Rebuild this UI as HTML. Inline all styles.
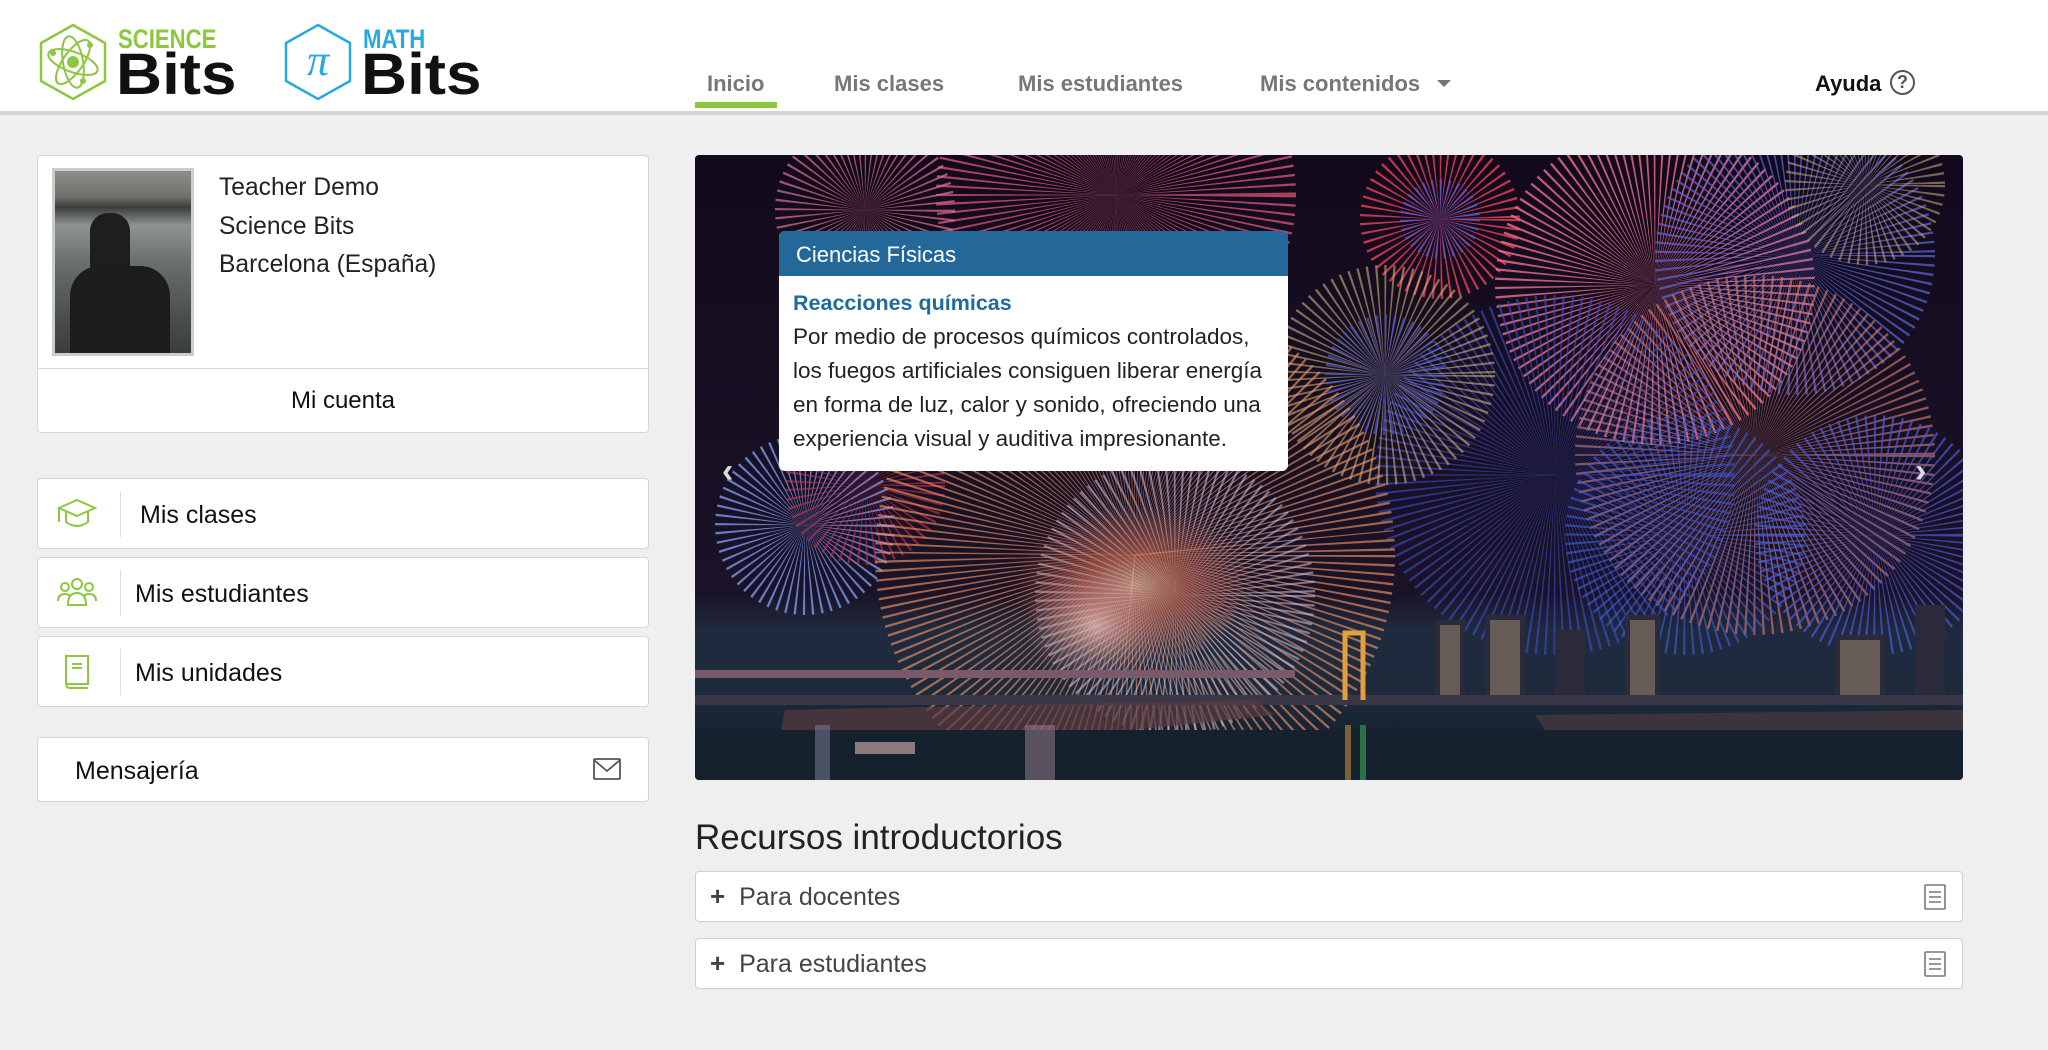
<!DOCTYPE html>
<html><head><meta charset="utf-8">
<style>
*{box-sizing:border-box;margin:0;padding:0}
body{width:2048px;height:1050px;background:#efefef;font-family:"Liberation Sans",Arial,sans-serif;position:relative;overflow:hidden;color:#222}
.hdr{position:absolute;left:0;top:0;width:2048px;height:115px;background:#fff;border-bottom:4px solid #d4d4d4}
.abs{position:absolute}
.nav{position:absolute;top:71px;font-size:22px;font-weight:bold;color:#777;white-space:nowrap}
.card{position:absolute;background:#fff;border:1px solid #d6d6d6;border-radius:4px}
.mi{position:absolute;left:37px;width:612px;height:71px;background:#fff;border:1px solid #d6d6d6;border-radius:4px}
.mi .sep{position:absolute;left:82px;top:12px;width:1px;height:46px;background:#ddd}
.mi .t{position:absolute;left:102px;top:22px;font-size:25px;color:#111}
.mi svg{position:absolute;left:18px;top:17px}
.acc{position:absolute;left:695px;width:1268px;height:51px;background:#fff;border:1px solid #d0d0d0;border-radius:4px}
.acc .t{position:absolute;left:14px;top:9px;font-size:25px;color:#444}
.acc svg{position:absolute;right:16px;top:12px}
.bits{position:absolute;top:46px;font-size:58px;font-weight:bold;color:#111;line-height:58px;transform:scaleX(1.1);transform-origin:left}
</style></head><body>
<div class="hdr"></div>
<svg class="abs" style="left:38px;top:23px" width="70" height="78" viewBox="0 0 70 78">
<polygon points="35,2 67,20 67,58 35,76 3,58 3,20" fill="none" stroke="#8dc63f" stroke-width="2.5"/>
<g fill="none" stroke="#8dc63f" stroke-width="2">
<ellipse cx="35" cy="39" rx="26" ry="10" transform="rotate(20 35 39)"/>
<ellipse cx="35" cy="39" rx="26" ry="10" transform="rotate(-55 35 39)"/>
<ellipse cx="35" cy="39" rx="26" ry="10" transform="rotate(80 35 39)"/>
</g><circle cx="35" cy="39" r="6" fill="#8dc63f"/><circle cx="15" cy="30" r="3" fill="#8dc63f"/><circle cx="52" cy="22" r="3" fill="#8dc63f"/><circle cx="45" cy="58" r="3" fill="#8dc63f"/>
</svg>
<div class="abs" style="left:118px;top:24px;font-size:27px;font-weight:bold;color:#8dc63f;transform:scaleX(.82);transform-origin:left">SCIENCE</div>
<div class="bits" style="left:116px">Bits</div>
<svg class="abs" style="left:283px;top:23px" width="70" height="78" viewBox="0 0 70 78">
<polygon points="35,2 67,20 67,58 35,76 3,58 3,20" fill="none" stroke="#29a8e0" stroke-width="2.5"/>
<text x="35" y="52" text-anchor="middle" font-family="Liberation Serif,serif" font-style="italic" font-size="44" fill="#29a8e0">π</text>
</svg>
<div class="abs" style="left:363px;top:24px;font-size:27px;font-weight:bold;color:#29a8e0;transform:scaleX(.82);transform-origin:left">MATH</div>
<div class="bits" style="left:361px">Bits</div>
<div class="nav" style="left:707px">Inicio</div>
<div class="abs" style="left:695px;top:102px;width:82px;height:6px;background:#8dc63f"></div>
<div class="nav" style="left:834px">Mis clases</div>
<div class="nav" style="left:1018px">Mis estudiantes</div>
<div class="nav" style="left:1260px">Mis contenidos</div>
<div class="abs" style="left:1437px;top:80px;width:0;height:0;border-left:7px solid transparent;border-right:7px solid transparent;border-top:7px solid #777"></div>
<div class="nav" style="left:1815px;color:#111">Ayuda</div>
<div class="abs" style="left:1890px;top:70px;width:25px;height:25px;border:2px solid #555;border-radius:50%;font-size:18px;font-weight:bold;color:#555;text-align:center;line-height:21px">?</div>

<div class="card" style="left:37px;top:155px;width:612px;height:278px"></div>
<div class="abs" style="left:52px;top:168px;width:142px;height:188px;border:3px solid #ccc;background:linear-gradient(180deg,#8a8d88 0%,#6e716c 14%,#3b3e3a 20%,#8f9490 30%,#6a6f6c 50%,#4a4f4c 80%,#3a3d3b 100%);overflow:hidden">
<div style="position:absolute;left:35px;top:42px;width:40px;height:60px;background:#1e1f1d;border-radius:18px 18px 8px 8px"></div>
<div style="position:absolute;left:15px;top:95px;width:100px;height:100px;background:#1c1d1b;border-radius:30px 30px 0 0"></div>
</div>
<div class="abs" style="left:219px;top:169px;font-size:24.6px;line-height:38.5px;color:#222">Teacher Demo<br>Science Bits<br>Barcelona (España)</div>
<div class="abs" style="left:38px;top:368px;width:610px;height:1px;background:#d6d6d6"></div>
<div class="abs" style="left:37px;top:387px;width:612px;text-align:center;font-size:24px;color:#111">Mi cuenta</div>

<div class="mi" style="top:478px"><svg width="42" height="36" viewBox="0 0 42 36" fill="none" stroke="#8dc63f" stroke-width="2"><path d="M3 12 L21 4 L39 12 L21 20 Z"/><path d="M10 16 V26 Q21 34 32 26 V16"/><path d="M3 12 V26"/></svg><div class="sep"></div><div class="t" style="left:102px">Mis clases</div></div>
<div class="mi" style="top:557px"><svg width="42" height="36" viewBox="0 0 42 36" fill="none" stroke="#8dc63f" stroke-width="2"><circle cx="21" cy="9" r="5"/><circle cx="9" cy="12" r="4"/><circle cx="33" cy="12" r="4"/><path d="M12 30 Q12 18 21 18 Q30 18 30 30 Z"/><path d="M2 26 Q2 19 9 19 Q12 19 14 21"/><path d="M40 26 Q40 19 33 19 Q30 19 28 21"/></svg><div class="sep"></div><div class="t" style="left:97px">Mis estudiantes</div></div>
<div class="mi" style="top:636px"><svg width="42" height="36" viewBox="0 0 42 36" fill="none" stroke="#8dc63f" stroke-width="2"><path d="M10 2 H32 V30 H12 Q10 30 10 28 Z"/><path d="M10 28 Q10 34 14 34 H32"/><path d="M16 10 H26 M16 14 H26"/></svg><div class="sep"></div><div class="t" style="left:97px">Mis unidades</div></div>
<div class="mi" style="top:737px;height:65px"><div class="t" style="left:37px;top:19px">Mensajería</div>
<svg style="left:555px;top:20px" width="28" height="22" viewBox="0 0 28 22" fill="none" stroke="#555" stroke-width="1.8"><rect x="1" y="1" width="26" height="20" rx="1"/><path d="M1 2 L14 13 L27 2"/></svg></div>

<!-- carousel -->
<svg class="abs" style="left:695px;top:155px;border-radius:4px" width="1268" height="625" viewBox="0 0 1268 625">
<defs>
<linearGradient id="sky" x1="0" y1="0" x2="0" y2="1"><stop offset="0" stop-color="#120a1c"/><stop offset=".7" stop-color="#1a1226"/><stop offset=".76" stop-color="#202a3e"/><stop offset=".86" stop-color="#1c2a3c"/><stop offset="1" stop-color="#0e1a28"/></linearGradient>
<radialGradient id="glow" cx=".5" cy=".5" r=".5"><stop offset="0" stop-color="#ffd0b0"/><stop offset=".4" stop-color="#e07050" stop-opacity=".8"/><stop offset="1" stop-color="#e07050" stop-opacity="0"/></radialGradient>
<radialGradient id="smoke" cx=".5" cy=".5" r=".5"><stop offset="0" stop-color="#f0c8c0"/><stop offset="1" stop-color="#c08080" stop-opacity="0"/></radialGradient>
</defs>
<rect width="1268" height="625" fill="url(#sky)"/>
<g fill="none" stroke-dasharray="1.2 3.5">
<circle cx="421" cy="40" r="90" stroke="#e05878" stroke-width="180" opacity=".75"/>
<circle cx="170" cy="55" r="45" stroke="#e07090" stroke-width="90" opacity=".7"/>
<circle cx="745" cy="64" r="40" stroke="#d83a50" stroke-width="80" opacity=".9"/>
<circle cx="745" cy="64" r="20" stroke="#5a5ad0" stroke-width="40" opacity=".8"/>
<circle cx="960" cy="130" r="80" stroke="#f0708a" stroke-width="160" opacity=".8"/>
<circle cx="1100" cy="100" r="70" stroke="#5a6ae0" stroke-width="140" opacity=".7"/>
<circle cx="1170" cy="30" r="40" stroke="#c0a070" stroke-width="80" opacity=".6"/>
<circle cx="1060" cy="300" r="90" stroke="#e08070" stroke-width="180" opacity=".6"/>
<circle cx="860" cy="320" r="90" stroke="#3a50d0" stroke-width="180" opacity=".6"/>
<circle cx="990" cy="380" r="60" stroke="#4060e0" stroke-width="120" opacity=".6"/>
<circle cx="1180" cy="380" r="60" stroke="#4a5ae0" stroke-width="120" opacity=".7"/>
<circle cx="690" cy="220" r="55" stroke="#e0c080" stroke-width="110" opacity=".55"/>
<circle cx="690" cy="220" r="30" stroke="#4a5ad0" stroke-width="60" opacity=".7"/>
<circle cx="110" cy="370" r="45" stroke="#7a9af0" stroke-width="90" opacity=".8"/>
<circle cx="170" cy="330" r="40" stroke="#d03050" stroke-width="80" opacity=".6"/>
<circle cx="440" cy="400" r="130" stroke="#f09060" stroke-width="260" opacity=".65"/>
<circle cx="480" cy="440" r="70" stroke="#c0c8f0" stroke-width="140" opacity=".55"/>
</g>
<ellipse cx="440" cy="430" rx="120" ry="80" fill="url(#glow)" opacity=".6"/>
<ellipse cx="400" cy="470" rx="70" ry="60" fill="url(#smoke)" opacity=".7"/>
<!-- buildings -->
<g fill="#2a2a3a">
<rect x="740" y="465" width="30" height="80"/><rect x="790" y="460" width="40" height="85"/><rect x="860" y="475" width="30" height="70"/><rect x="930" y="460" width="35" height="85"/><rect x="1140" y="480" width="50" height="65"/><rect x="1220" y="450" width="30" height="95"/>
</g>
<g fill="#d8b890" opacity=".35"><rect x="745" y="470" width="20" height="70"/><rect x="795" y="465" width="30" height="80"/><rect x="935" y="465" width="25" height="80"/><rect x="1145" y="485" width="40" height="60"/></g>
<rect x="0" y="515" width="600" height="8" fill="#7a5a6a"/><rect x="0" y="540" width="1268" height="10" fill="#3a3848"/>
<path d="M650 545 V478 H668 V545" fill="none" stroke="#e0a040" stroke-width="5"/>
<path d="M80 605 L200 600 L580 560 L560 545 L90 555 Z" fill="#5a3a40" opacity=".7"/>
<path d="M840 560 L1268 555 L1268 575 L850 575 Z" fill="#4a3a40" opacity=".7"/>
<rect x="0" y="575" width="1268" height="50" fill="#15222e"/>
<g opacity=".5"><rect x="650" y="570" width="6" height="55" fill="#e0a040"/><rect x="665" y="570" width="6" height="55" fill="#40c060"/><rect x="330" y="570" width="30" height="55" fill="#a08090"/><rect x="120" y="570" width="15" height="55" fill="#8080a0"/></g>
<rect x="160" y="587" width="60" height="12" fill="#c0a0a0" opacity=".7"/>
</svg>
<div class="abs" style="left:722px;top:452px;color:#ddd;font-size:34px;font-weight:bold">‹</div>
<div class="abs" style="left:1915px;top:452px;color:#ddd;font-size:34px;font-weight:bold">›</div>
<div class="abs" style="left:779px;top:231px;width:509px;height:240px;background:#fff;border-radius:6px;overflow:hidden">
<div style="height:45px;background:#24689a;color:#fff;font-size:22px;padding:11px 0 0 17px">Ciencias Físicas</div>
<div style="padding:14px 0 0 14px;font-size:22.5px;line-height:34px;color:#222;white-space:nowrap">
<div style="color:#1f6b9b;font-weight:bold;line-height:26px;font-size:21.5px;margin-bottom:4px">Reacciones químicas</div>
Por medio de procesos químicos controlados,<br>los fuegos artificiales consiguen liberar energía<br>en forma de luz, calor y sonido, ofreciendo una<br>experiencia visual y auditiva impresionante.</div>
</div>

<div class="abs" style="left:695px;top:818px;font-size:35px;color:#222">Recursos introductorios</div>
<div class="acc" style="top:871px"><div class="t"><b style="font-size:26px">+</b>&nbsp; Para docentes</div><svg width="22" height="26" viewBox="0 0 22 26" fill="none" stroke="#777" stroke-width="1.6"><rect x="1" y="1" width="20" height="24" rx="1"/><path d="M5 8 H17 M5 13 H17 M5 18 H17"/></svg></div>
<div class="acc" style="top:938px"><div class="t"><b style="font-size:26px">+</b>&nbsp; Para estudiantes</div><svg width="22" height="26" viewBox="0 0 22 26" fill="none" stroke="#777" stroke-width="1.6"><rect x="1" y="1" width="20" height="24" rx="1"/><path d="M5 8 H17 M5 13 H17 M5 18 H17"/></svg></div>
</body></html>
